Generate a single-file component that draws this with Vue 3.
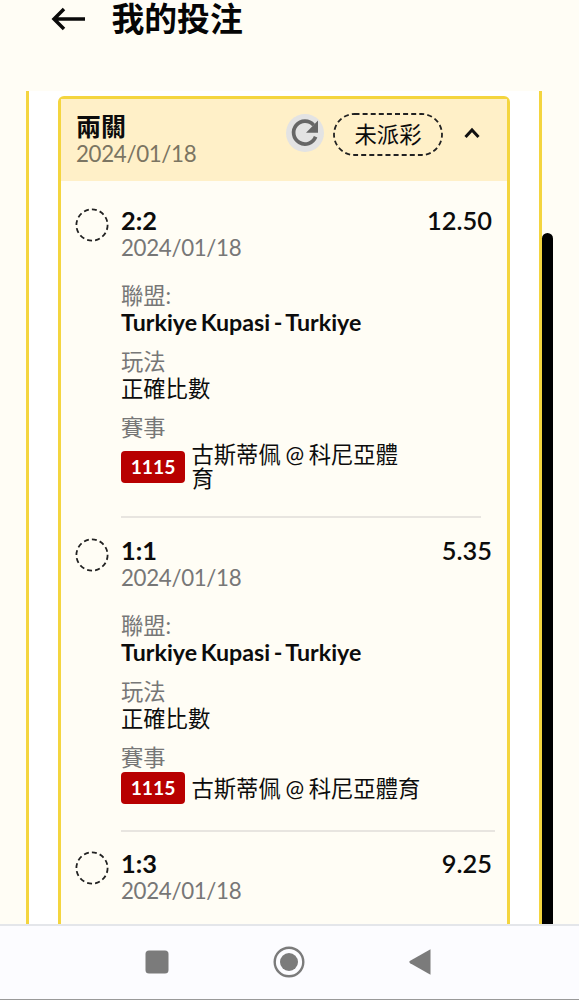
<template>
  <div class="screen">
    <div class="topBar">
      <svg class="backIcon" viewBox="0 0 36 26">
        <path d="M34 13H3M13 3L3 13l10 10" />
      </svg>
      <h1>我的投注</h1>
    </div>

    <div class="betList">
      <div class="betCard">
        <div class="cardHeader">
          <div class="cardTitle">
            <h2>兩關</h2>
            <p class="date">{{ bet.date }}</p>
          </div>
          <div class="refresh">
            <svg viewBox="0 0 38 38">
              <path class="arc" d="M27.6 11.1A11.4 11.4 0 1 0 29.6 22.8" />
              <path class="head" d="M32 6.5v12.3H20z" />
            </svg>
          </div>
          <div class="status">
            <svg class="pillBorder" viewBox="0 0 110 43">
              <rect x="1" y="1" width="108" height="41" rx="20.5" />
            </svg>
            <span>{{ bet.status }}</span>
          </div>
          <svg class="chevron" viewBox="0 0 16 12">
            <path d="M1.5 10L8 3l6.5 7" />
          </svg>
        </div>

        <div v-for="leg in bet.legs" :key="leg.pick" class="leg">
          <svg class="legMark" viewBox="0 0 34 34">
            <circle cx="17" cy="17" r="15.6" />
          </svg>
          <div class="legBody" :class="{ narrow: leg.narrow }">
            <div class="legTop">
              <h3>{{ leg.pick }}</h3>
              <h3 class="odds">{{ leg.odds }}</h3>
            </div>
            <p class="date">{{ bet.date }}</p>
            <template v-if="leg.match">
              <div class="field first">
                <p class="label">聯盟:</p>
                <p class="league">{{ leg.match.league }}</p>
              </div>
              <div class="field">
                <p class="label">玩法</p>
                <p>正確比數</p>
              </div>
              <div class="field">
                <p class="label">賽事</p>
                <div class="match">
                  <span class="matchId">{{ leg.match.id }}</span>
                  <span class="teams">{{ leg.match.teams }}</span>
                </div>
              </div>
              <div class="divider"></div>
            </template>
          </div>
        </div>
      </div>
    </div>

    <div class="scrollThumb"></div>

    <div class="navBar">
      <svg viewBox="0 0 24 24"><rect x="0.5" y="0.5" width="23" height="23" rx="3.5" /></svg>
      <svg class="home" viewBox="0 0 32 32">
        <circle class="ring" cx="16" cy="16" r="14.3" />
        <circle cx="16" cy="16" r="9" />
      </svg>
      <svg class="back" viewBox="0 0 22 28"><path d="M21.5 1.2v25.6L1.2 15.2q-1.8-1.2 0-2.4z" /></svg>
    </div>
  </div>
</template>

<script setup>
const match = {
  id: "1115",
  league: "Turkiye Kupasi - Turkiye",
  teams: "古斯蒂佩 @ 科尼亞體育",
};

const bet = {
  date: "2024/01/18",
  status: "未派彩",
  legs: [
    { pick: "2:2", odds: "12.50", narrow: true, match },
    { pick: "1:1", odds: "5.35", narrow: false, match },
    { pick: "1:3", odds: "9.25", narrow: false },
  ],
};
</script>

<style>
body {
  margin: 0;
  overflow: hidden;
}
</style>

<style scoped>
.screen {
  position: relative;
  display: flex;
  flex-direction: column;
  width: 579px;
  height: 1000px;
  overflow: hidden;
  background-color: #fffdf5;
  font-family: "Lato", "Noto Sans CJK TC", sans-serif;
  font-size: 22.3px;
  line-height: 27px;
  color: #0c0c0c;
}

h1,
h2,
h3,
p {
  margin: 0;
}

svg {
  display: block;
  flex: none;
}

.topBar {
  display: flex;
  align-items: center;
  flex: none;
  box-sizing: border-box;
  height: 91px;
  padding: 0 0 53px 51px;
}

.backIcon {
  width: 36px;
  height: 26px;
  fill: none;
  stroke: #0a0a0a;
  stroke-width: 3.5;
}

h1 {
  margin-left: 24.5px;
  font-size: 32.8px;
  font-weight: 700;
  line-height: 38px;
  color: #050505;
}

.betList {
  flex: 1;
  min-height: 0;
  margin: 0 37px 0 26px;
  padding: 5px 29px 0;
  border: solid #f4d53f;
  border-width: 0 3px;
  background-color: #fff;
  overflow: hidden;
}

.betCard {
  height: 1200px;
  border: solid 3px #f4d53f;
  border-radius: 6px;
  background-color: #fffdf5;
}

.cardHeader {
  display: flex;
  align-items: flex-start;
  box-sizing: border-box;
  height: 82px;
  padding: 13px 27px 0 15px;
  background-color: #fff0c8;
}

.cardTitle {
  width: 210px;
}

h2 {
  font-size: 25px;
  font-weight: 700;
  line-height: 28px;
}

.date,
.label {
  color: #777;
}

.date {
  letter-spacing: -0.33px;
}

.cardHeader .date {
  color: #7b7562;
}

.refresh {
  width: 38px;
  height: 38px;
  margin-top: 2px;
  border-radius: 50%;
  background-color: #e3e3e3;
}

.refresh .arc {
  fill: none;
  stroke: #666;
  stroke-width: 3.7;
}

.refresh .head {
  fill: #666;
}

.status {
  position: relative;
  display: flex;
  align-items: center;
  justify-content: center;
  width: 110px;
  height: 43px;
  margin: 1px 21px 0 9px;
}

.pillBorder {
  position: absolute;
  top: 0;
  left: 0;
  width: 110px;
  height: 43px;
}

.pillBorder rect,
.legMark circle {
  fill: none;
  stroke: #222;
  stroke-width: 1.8;
  stroke-dasharray: 5 3.1;
}

.chevron {
  width: 16px;
  height: 12px;
  margin-top: 15px;
  fill: none;
  stroke: #111;
  stroke-width: 3;
}

.leg {
  display: flex;
  padding: 0 15px 0 13.5px;
}

.cardHeader + .leg {
  margin-top: 26px;
}

.legMark {
  width: 34px;
  height: 34px;
  margin-top: 1px;
}

.legBody {
  flex: 1;
  margin-left: 12.5px;
}

.legTop {
  display: flex;
  justify-content: space-between;
}

h3 {
  font-size: 25.4px;
  font-weight: 700;
  line-height: 27px;
}

.odds {
  font-weight: 600;
}

.field {
  margin-top: 12px;
}

.field.first {
  margin-top: 21px;
}

.league {
  font-size: 23.2px;
  font-weight: 700;
  word-spacing: -2px;
}

.match {
  display: flex;
  align-items: center;
  margin-top: 1px;
  line-height: 24px;
}

.matchId {
  flex: none;
  width: 64px;
  margin-right: 6.5px;
  border-radius: 4px;
  background-color: #b80000;
  color: #fff;
  font-size: 19.3px;
  font-weight: 700;
  line-height: 32px;
  text-align: center;
}

.teams {
  padding-top: 1px;
  word-spacing: -1px;
}

.narrow .teams {
  width: 220px;
}

.divider {
  height: 2px;
  margin: 26px -3px 18px 0;
  background-color: #e8e5e0;
}

.narrow .divider {
  margin: 25px 11px 19px 0;
}

.scrollThumb {
  position: absolute;
  top: 233px;
  left: 542px;
  width: 11px;
  height: 720px;
  border-radius: 6px;
  background-color: #000;
}

.navBar {
  position: relative;
  display: flex;
  align-items: center;
  flex: none;
  box-sizing: border-box;
  height: 76px;
  padding: 0 0 2px 145px;
  border-top: solid 2px #e4e6ea;
  border-bottom: solid 1px #999;
  background-color: #fcfcff;
}

.navBar svg {
  width: 24px;
  height: 24px;
  fill: #7b7b7b;
}

.navBar .home {
  width: 32px;
  height: 32px;
  margin: 0 104px 0 104px;
}

.home .ring {
  fill: none;
  stroke: #7b7b7b;
  stroke-width: 2.4;
}

.navBar .back {
  width: 22px;
  height: 28px;
}
</style>
